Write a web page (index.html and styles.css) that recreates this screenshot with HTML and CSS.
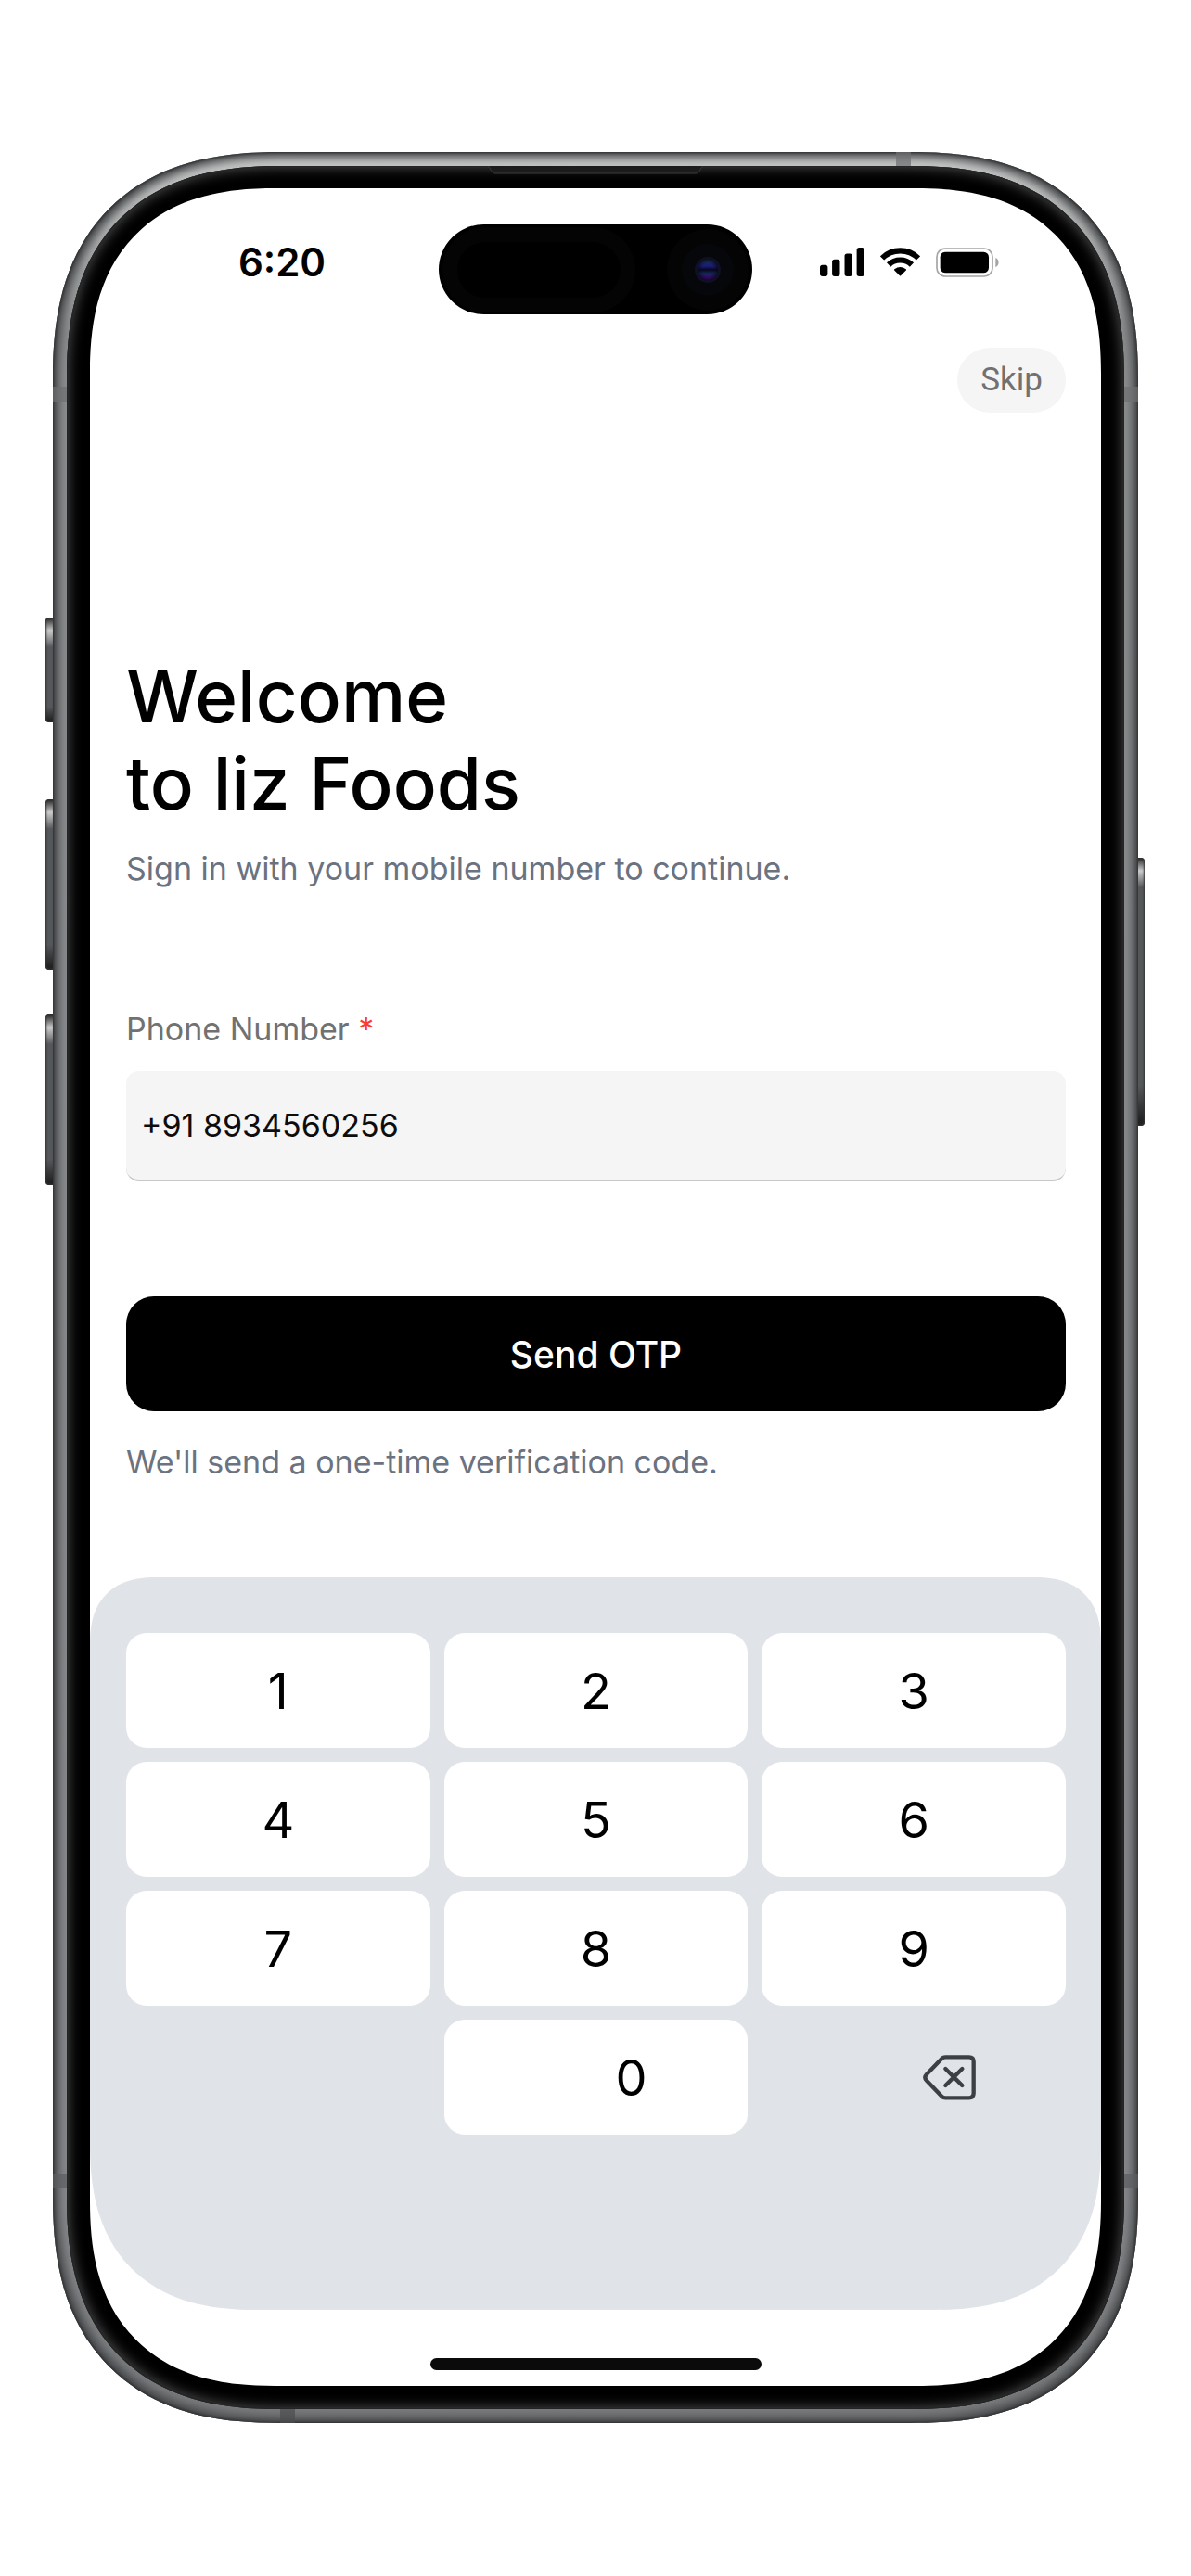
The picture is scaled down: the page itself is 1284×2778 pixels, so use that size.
FILE: index.html
```
<!DOCTYPE html>
<html lang="en">
	<head>
		<meta charset="utf-8" />
		<meta name="viewport" content="width=device-width, initial-scale=1" />
		<title>liz Foods</title>
		<link rel="stylesheet" href="styles.css">
	</head>
	<body>
		<div class="phone">
			<span class="side-button action"></span>
			<span class="side-button volume-up"></span>
			<span class="side-button volume-down"></span>
			<span class="side-button power"></span>
			<div class="frame">
				<span class="band band-top"></span>
				<span class="band band-bottom"></span>
				<span class="band band-side upper left"></span>
				<span class="band band-side upper right"></span>
				<span class="band band-side lower left"></span>
				<span class="band band-side lower right"></span>
				<div class="bezel">
					<svg class="speaker" viewBox="0 0 232 9" aria-hidden="true">
						<path d="M0 0C3 1 3 8 8 8H224C229 8 229 1 232 0" fill="#1c1c1c" stroke="#3a3a3a" />
					</svg>
					<div class="screen">
						<header class="status-bar">
							<div class="time">6:20</div>
							<div class="island">
								<span class="sensor"></span>
								<span class="camera"><span class="lens"></span></span>
							</div>
							<div class="status-icons">
								<svg width="48" height="31" viewBox="0 0 143 92" aria-hidden="true">
									<rect x="0" y="56" width="25" height="36" rx="8" />
									<rect x="39" y="38" width="25" height="54" rx="8" />
									<rect x="79" y="19" width="25" height="73" rx="8" />
									<rect x="118" y="0" width="25" height="92" rx="8" />
								</svg>
								<svg width="43" height="31" viewBox="0 0 128 92" aria-hidden="true">
									<path d="M6 34A82 82 0 0 1 122 34" fill="none" stroke="#000" stroke-width="18" />
									<path d="M27 55A53 53 0 0 1 101 55" fill="none" stroke="#000" stroke-width="18" />
									<path d="M47 71Q64 59 81 71L64 88Z" stroke="#000" stroke-width="5" stroke-linejoin="round" />
								</svg>
								<svg width="68" height="32" viewBox="0 0 204 96" aria-hidden="true">
									<rect x="3" y="3" width="180" height="90" rx="27" fill="none" stroke="#a4a4a4" stroke-width="5" />
									<rect x="14" y="14" width="157" height="68" rx="17" />
									<path d="M193 33C206 38 206 58 193 63Z" fill="#a4a4a4" />
								</svg>
							</div>
						</header>
						<main class="content">
							<button type="button" class="skip">Skip</button>
							<h1>Welcome<br>to liz Foods</h1>
							<p class="subtitle">Sign in with your mobile number to continue.</p>
							<form class="login">
								<label for="phone">Phone Number <span class="required">*</span></label>
								<input type="tel" id="phone" value="+91 8934560256" />
								<button type="button" class="send">Send OTP</button>
							</form>
							<p class="note">We'll send a one-time verification code.</p>
						</main>
						<div class="keypad">
							<button type="button" class="key">1</button>
							<button type="button" class="key">2</button>
							<button type="button" class="key">3</button>
							<button type="button" class="key">4</button>
							<button type="button" class="key">5</button>
							<button type="button" class="key">6</button>
							<button type="button" class="key">7</button>
							<button type="button" class="key">8</button>
							<button type="button" class="key">9</button>
							<button type="button" class="key zero">0</button>
							<button type="button" class="key delete" aria-label="Delete">
								<svg width="57" height="49" viewBox="0 0 171 147" fill="none" stroke="#3c4044" stroke-width="13" stroke-linecap="round" stroke-linejoin="round" aria-hidden="true">
									<path d="M73 7H149Q164 7 164 22V124Q164 139 149 139H73Q66 139 61 134L12 83Q2 73 12 63L61 12Q66 7 73 7Z" />
									<path d="M73 45L127 99M127 45L73 99" />
								</svg>
							</button>
						</div>
						<div class="home-indicator"></div>
					</div>
				</div>
			</div>
		</div>
	</body>
</html>
```
FILE: styles.css
```
* {
	box-sizing: border-box;
}
body {
	margin: 0;
	background: #fff;
	color: #000;
	font-family: Inter, sans-serif;
}
h1, p {
	margin: 0;
}
button, input {
	border: 0;
	font-family: inherit;
}
svg {
	display: block;
}

/* Phone body */
.phone {
	position: relative;
	margin: 164px 57px;
}
.frame {
	position: relative;
	padding: 15px;
	border-radius: 208px;
	background: linear-gradient(#c8c9c9, #8a8c8d 8%, #85878a 90%, #77797b);
	box-shadow: inset 0 0 3px 1px #2b2d2e, inset 0 0 10px 6px #46484a;
}
.bezel {
	position: relative;
	padding: 24px 25px 25px;
	border-radius: 193px;
	background: #000;
	box-shadow: inset 0 0 0 1px #222425, inset 0 0 14px 2px #4a4a4a;
}
.screen {
	position: relative;
	padding: 39px 0 17px;
	border-radius: 168px;
	background: #fff;
	overflow: hidden;
}
.side-button {
	position: absolute;
	left: -8px;
	width: 10px;
	border-radius: 4px 0 0 4px;
	background: linear-gradient(#222, #ccc 14px, #55585a 32px, #55585a 85%, #222 98%);
	box-shadow: inset 0 0 2px 1px #333;
}
.action {
	top: 502px;
	height: 113px;
}
.volume-up {
	top: 698px;
	height: 184px;
}
.volume-down {
	top: 930px;
	height: 184px;
}
.power {
	top: 761px;
	left: auto;
	right: -7px;
	height: 289px;
	border-radius: 0 4px 4px 0;
}
.band {
	position: absolute;
	background: #6d6f70;
	opacity: 0.7;
}
.band-top, .band-bottom {
	width: 16px;
	height: 15px;
}
.band-top {
	top: 0;
	right: 245px;
}
.band-bottom {
	bottom: 0;
	left: 245px;
	background: #4b4d4e;
}
.band-side {
	width: 15px;
	height: 16px;
}
.upper {
	top: 253px;
}
.lower {
	bottom: 253px;
	background: #5b5d5f;
}
.left {
	left: 0;
}
.right {
	right: 0;
}
.speaker {
	position: absolute;
	top: 0;
	left: calc(50% - 116px);
	width: 232px;
}

/* Smoother corners where the browser has them */
@supports (corner-shape: superellipse(1.28)) {
	.frame, .bezel, .screen, .keypad {
		corner-shape: superellipse(1.28);
	}
	.frame {
		border-radius: 245px;
	}
	.bezel {
		border-radius: 230px;
	}
	.screen {
		border-radius: 200px;
	}
}

/* Status bar */
.status-bar {
	display: grid;
	grid-template-columns: 1fr auto 1fr;
	align-items: center;
}
.time {
	padding: 0 0 16px 38px;
	font-size: 42px;
	font-weight: 600;
	line-height: 48px;
	text-align: center;
}
.island {
	display: flex;
	align-items: center;
	justify-content: space-between;
	width: 338px;
	height: 97px;
	padding: 0 20px;
	border-radius: 49px;
	background: #000;
}
.sensor {
	width: 176px;
	height: 60px;
	border-radius: 30px;
	box-shadow: 0 0 0 16px #040404;
}
.camera {
	display: flex;
	align-items: center;
	justify-content: center;
	width: 56px;
	height: 56px;
	border-radius: 50%;
	background: #05070b;
	box-shadow: 0 0 0 16px #040404;
}
.lens {
	width: 28px;
	height: 28px;
	border: 3px solid #110f24;
	border-radius: 50%;
	background: radial-gradient(circle, transparent 40%, rgba(5, 5, 20, 0.6) 70%), linear-gradient(#0f4054, #1d1a78 32%, #07071c 50%, #102c50 68%, #40077a 88%);
}
.status-icons {
	display: flex;
	justify-content: center;
	gap: 17px;
	padding: 0 38px 16px 0;
}

/* Sign in */
.content {
	display: flex;
	flex-direction: column;
	padding: 36px 38px 100px 39px;
}
.skip {
	align-self: flex-end;
	padding: 0 25px;
	border-radius: 35px;
	background: #f5f5f5;
	color: #717171;
	font-family: Roboto, sans-serif;
	font-size: 35px;
	line-height: 70px;
}
h1 {
	margin-top: 259px;
	font-size: 78px;
	font-weight: 500;
	line-height: 94px;
}
.subtitle, .note {
	color: #6b7280;
	font-size: 34px;
	line-height: 48px;
}
.subtitle {
	margin-top: 21px;
}
.note {
	margin-top: 31px;
}
.login {
	display: flex;
	flex-direction: column;
	margin-top: 125px;
}
label {
	color: #717171;
	font-size: 34px;
	line-height: 48px;
}
.required {
	color: #ff3b30;
}
input {
	width: 100%;
	height: 119px;
	margin-top: 21px;
	padding: 0 16px;
	border-bottom: 2px solid #c8c8c8;
	border-radius: 14px;
	background: #f5f5f5;
	color: #0d0d0d;
	font-size: 34px;
}
.send {
	height: 124px;
	margin-top: 124px;
	padding: 0;
	border-radius: 30px;
	background: #000;
	color: #fff;
	font-size: 39px;
	font-weight: 500;
}

/* Keypad */
.keypad {
	display: grid;
	grid-template-columns: repeat(3, 1fr);
	gap: 15px;
	padding: 60px 38px 189px 39px;
	border-radius: 72px 72px 180px 180px;
	background: #e0e3e8;
}
.key {
	display: flex;
	align-items: center;
	justify-content: center;
	height: 124px;
	padding: 0;
	border-radius: 22px;
	background: #fff;
	color: #000;
	font-size: 54px;
}
.zero {
	grid-column: 2;
}
.zero, .delete {
	padding-left: 76px;
}
.delete {
	background: none;
}
.home-indicator {
	width: 357px;
	height: 13px;
	margin: 52px auto 0;
	border-radius: 7px;
	background: #0b0b0b;
}
```
